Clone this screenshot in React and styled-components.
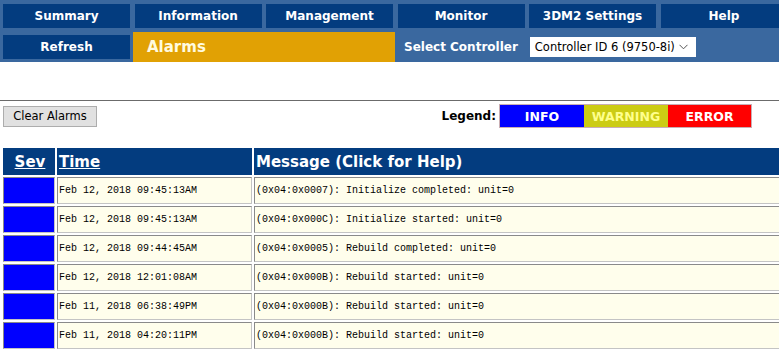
import React from "react";
import styled, { createGlobalStyle } from "styled-components";

const Global = createGlobalStyle`
  html, body { margin: 0; padding: 0; background: #fff; overflow: hidden; }
  body { font-family: "DejaVu Sans", Verdana, sans-serif; }
`;

const Page = styled.div`
  width: 779px;
`;

const Nav = styled.div`
  background: #3a689f;
  padding: 4px 0 0 3px;
  display: flex;
  flex-direction: column;
  gap: 4px;
  overflow: hidden;
`;

const NavRow = styled.div`
  display: grid;
  grid-template-columns: repeat(6, 127px);
  column-gap: 4.5px;
`;

const NavButton = styled.div`
  height: 24px;
  background: #033c7f;
  color: #fff;
  font-weight: bold;
  font-size: 12px;
  display: flex;
  align-items: center;
  justify-content: center;
  white-space: nowrap;
`;

const SubRow = styled.div`
  display: flex;
  align-items: center;
  height: 30px;
`;

const RefreshButton = styled(NavButton)`
  width: 127px;
  height: 24px;
`;

const Title = styled.div`
  margin-left: 3px;
  width: 262px;
  height: 30px;
  background: #e1a104;
  color: #fffbe0;
  font-size: 15px;
  font-weight: bold;
  display: flex;
  align-items: center;
  padding-left: 14px;
  box-sizing: border-box;
`;

const ControllerLabel = styled.div`
  margin-left: 9px;
  color: #fff;
  font-size: 12px;
  font-weight: bold;
  white-space: nowrap;
`;

const FakeSelect = styled.div`
  margin-left: 12px;
  width: 166px;
  height: 20px;
  background: #fff;
  box-sizing: border-box;
  display: flex;
  align-items: center;
  justify-content: space-between;
  padding: 0 8px 0 5px;
  font-family: "DejaVu Sans", Tahoma, sans-serif;
  font-size: 11.5px;
  color: #000;
  white-space: nowrap;
`;

const Rule = styled.div`
  margin-top: 38px;
  height: 1px;
  background: #6b6b6b;
`;

const Toolbar = styled.div`
  margin-top: 3px;
  display: flex;
  align-items: center;
  justify-content: space-between;
  padding: 0 27px 0 3px;
  height: 24px;
`;

const ClearButton = styled.button`
  width: 94px;
  height: 21px;
  background: #e1e1e1;
  border: 1px solid #adadad;
  font-family: "DejaVu Sans", Tahoma, sans-serif;
  font-size: 11.5px;
  color: #000;
  padding: 0;
  margin: 0;
`;

const Legend = styled.div`
  display: flex;
  align-items: center;
  height: 24px;
`;

const LegendLabel = styled.span`
  font-size: 12px;
  font-weight: bold;
  color: #000;
  margin-right: 3px;
`;

const LegendBoxes = styled.div`
  display: flex;
  border: 1px solid #c9aeb4;
`;

const LegendBox = styled.div`
  width: ${(p) => p.$w}px;
  height: 22px;
  background: ${(p) => p.$bg};
  color: ${(p) => p.$fg};
  font-size: 12.5px;
  font-weight: bold;
  display: flex;
  align-items: center;
  justify-content: center;
`;

const Table = styled.table`
  margin-top: 18px;
  margin-left: 1px;
  border-collapse: separate;
  border-spacing: 2px;
  width: 782px;
  table-layout: fixed;
`;

const HeadCell = styled.th`
  background: #033c7f;
  color: #fff;
  font-size: 15px;
  font-weight: bold;
  text-align: ${(p) => (p.$center ? "center" : "left")};
  height: 27px;
  padding: 0 0 0 2px;
  border: 0;
  white-space: nowrap;
`;

const HeadLink = styled.span`
  text-decoration: underline;
`;

const BodyCell = styled.td`
  background: ${(p) => (p.$sev ? "#0000ff" : "#fffeec")};
  border: 1px solid #8a8a8a;
  border-right-color: #c4c4c4;
  border-bottom-color: #c4c4c4;
  height: 25px;
  padding: 0 0 0 1px;
  font-family: "Liberation Mono", "DejaVu Sans Mono", monospace;
  font-size: 10px;
  color: #000;
  white-space: nowrap;
  overflow: hidden;
`;

const Chevron = () => (
  <svg width="9" height="6" viewBox="0 0 9 6">
    <path d="M0.5 0.8 L4.5 4.8 L8.5 0.8" fill="none" stroke="#555" strokeWidth="1" />
  </svg>
);

const rows = [
  ["Feb 12, 2018 09:45:13AM", "(0x04:0x0007): Initialize completed: unit=0"],
  ["Feb 12, 2018 09:45:13AM", "(0x04:0x000C): Initialize started: unit=0"],
  ["Feb 12, 2018 09:44:45AM", "(0x04:0x0005): Rebuild completed: unit=0"],
  ["Feb 12, 2018 12:01:08AM", "(0x04:0x000B): Rebuild started: unit=0"],
  ["Feb 11, 2018 06:38:49PM", "(0x04:0x000B): Rebuild started: unit=0"],
  ["Feb 11, 2018 04:20:11PM", "(0x04:0x000B): Rebuild started: unit=0"],
];

const navItems = ["Summary", "Information", "Management", "Monitor", "3DM2 Settings", "Help"];

export default function App() {
  return (
    <Page>
      <Global />
      <Nav>
        <NavRow>
          {navItems.map((n) => (
            <NavButton key={n}>{n}</NavButton>
          ))}
        </NavRow>
        <SubRow>
          <RefreshButton>Refresh</RefreshButton>
          <Title>Alarms</Title>
          <ControllerLabel>Select Controller</ControllerLabel>
          <FakeSelect>
            <span>Controller ID 6 (9750-8i)</span>
            <Chevron />
          </FakeSelect>
        </SubRow>
      </Nav>
      <Rule />
      <Toolbar>
        <ClearButton>Clear Alarms</ClearButton>
        <Legend>
          <LegendLabel>Legend:</LegendLabel>
          <LegendBoxes>
            <LegendBox $w={84} $bg="#0000ff" $fg="#fff">INFO</LegendBox>
            <LegendBox $w={84} $bg="#cccc14" $fg="#ffff8c">WARNING</LegendBox>
            <LegendBox $w={83} $bg="#ff0000" $fg="#fff">ERROR</LegendBox>
          </LegendBoxes>
        </Legend>
      </Toolbar>
      <Table>
        <colgroup>
          <col style={{ width: "52px" }} />
          <col style={{ width: "195px" }} />
          <col />
        </colgroup>
        <thead>
          <tr>
            <HeadCell $center>
              <HeadLink>Sev</HeadLink>
            </HeadCell>
            <HeadCell>
              <HeadLink>Time</HeadLink>
            </HeadCell>
            <HeadCell>Message (Click for Help)</HeadCell>
          </tr>
        </thead>
        <tbody>
          {rows.map(([t, m], i) => (
            <tr key={i}>
              <BodyCell $sev />
              <BodyCell>{t}</BodyCell>
              <BodyCell>{m}</BodyCell>
            </tr>
          ))}
        </tbody>
      </Table>
    </Page>
  );
}
